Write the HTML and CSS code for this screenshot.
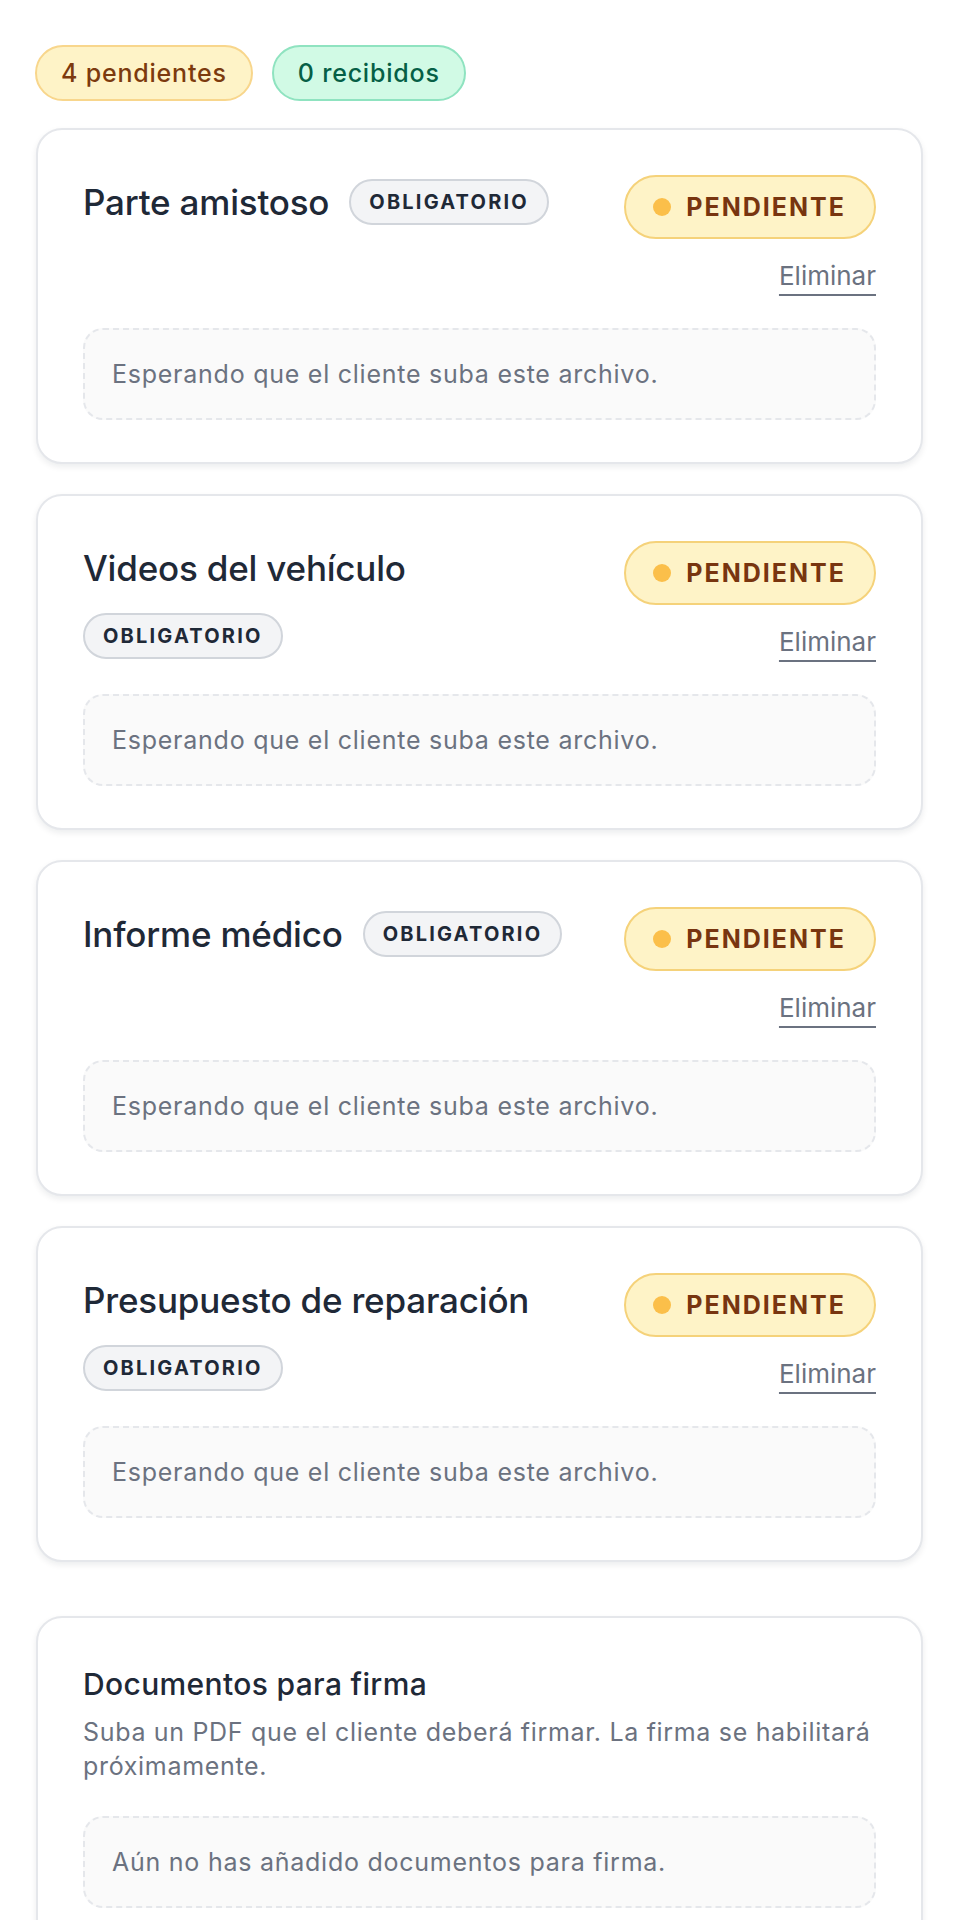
FILE: index.html
```html
<!DOCTYPE html>
<html lang="es">
<head>
<meta charset="utf-8">
<title>Documentos</title>
<link rel="stylesheet" href="styles.css">
</head>
<body>
<main class="page">
  <div class="summary">
    <span class="pill pill-pending">4 pendientes</span>
    <span class="pill pill-received">0 recibidos</span>
  </div>

  <section class="doc-list">
    <article class="card">
      <div class="card-head">
        <div class="card-title-group">
          <h3 class="card-title">Parte amistoso</h3>
          <span class="tag">OBLIGATORIO</span>
        </div>
        <div class="card-actions">
          <span class="status"><span class="status-dot"></span>PENDIENTE</span>
          <a class="remove" href="#">Eliminar</a>
        </div>
      </div>
      <div class="dropzone">Esperando que el cliente suba este archivo.</div>
    </article>

    <article class="card">
      <div class="card-head">
        <div class="card-title-group">
          <h3 class="card-title">Videos del vehículo</h3>
          <span class="tag">OBLIGATORIO</span>
        </div>
        <div class="card-actions">
          <span class="status"><span class="status-dot"></span>PENDIENTE</span>
          <a class="remove" href="#">Eliminar</a>
        </div>
      </div>
      <div class="dropzone">Esperando que el cliente suba este archivo.</div>
    </article>

    <article class="card">
      <div class="card-head">
        <div class="card-title-group">
          <h3 class="card-title">Informe médico</h3>
          <span class="tag">OBLIGATORIO</span>
        </div>
        <div class="card-actions">
          <span class="status"><span class="status-dot"></span>PENDIENTE</span>
          <a class="remove" href="#">Eliminar</a>
        </div>
      </div>
      <div class="dropzone">Esperando que el cliente suba este archivo.</div>
    </article>

    <article class="card">
      <div class="card-head">
        <div class="card-title-group">
          <h3 class="card-title">Presupuesto de reparación</h3>
          <span class="tag">OBLIGATORIO</span>
        </div>
        <div class="card-actions">
          <span class="status"><span class="status-dot"></span>PENDIENTE</span>
          <a class="remove" href="#">Eliminar</a>
        </div>
      </div>
      <div class="dropzone">Esperando que el cliente suba este archivo.</div>
    </article>
  </section>

  <section class="card sign-card">
    <h2 class="sign-title">Documentos para firma</h2>
    <p class="sign-desc">Suba un PDF que el cliente deberá firmar. La firma se habilitará próximamente.</p>
    <div class="dropzone">Aún no has añadido documentos para firma.</div>
  </section>
</main>
</body>
</html>
```

FILE: styles.css
```css
* {
  box-sizing: border-box;
}

html, body {
  margin: 0;
  padding: 0;
  background: #ffffff;
}

body {
  font-family: Inter, "Noto Sans", "Liberation Sans", sans-serif;
  color: #1f2937;
  -webkit-font-smoothing: antialiased;
}

.page {
  padding: 45px 38px 40px 36px;
}

.summary {
  display: flex;
  gap: 19px;
  margin-left: -1px;
}

.pill {
  display: inline-flex;
  align-items: center;
  height: 56px;
  padding: 0 24px;
  border: 2px solid;
  border-radius: 999px;
  font-size: 25px;
  font-weight: 500;
  letter-spacing: 0.8px;
  line-height: 1;
}

.pill-pending {
  background: #fef3c7;
  border-color: #f8d68c;
  color: #7c3a0e;
}

.pill-received {
  background: #d1fae5;
  border-color: #8fe3c0;
  color: #065f46;
}

.doc-list {
  display: flex;
  flex-direction: column;
  gap: 30px;
  margin-top: 27px;
}

.card {
  background: #ffffff;
  border: 2px solid #e5e7eb;
  border-radius: 26px;
  padding: 45px 45px 42px;
  box-shadow: 0 3px 6px rgba(17, 24, 39, 0.08);
}

.card-head {
  display: flex;
  justify-content: space-between;
  align-items: flex-start;
  gap: 24px;
  margin-bottom: 33px;
}

.card-title-group {
  flex: 1;
  min-width: 0;
  display: flex;
  flex-wrap: wrap;
  align-items: center;
  column-gap: 20px;
  row-gap: 18px;
}

.card-title {
  margin: 0;
  font-size: 35px;
  font-weight: 500;
  line-height: 54px;
  color: #1f2937;
  letter-spacing: -0.2px;
}

.tag {
  display: inline-flex;
  align-items: center;
  height: 46px;
  padding: 0 18px;
  border: 2px solid #d1d5db;
  border-radius: 999px;
  background: #f3f4f6;
  color: #1f2937;
  font-size: 20px;
  font-weight: 700;
  letter-spacing: 2.2px;
  line-height: 1;
}

.card-actions {
  flex-shrink: 0;
  display: flex;
  flex-direction: column;
  align-items: flex-end;
  gap: 17px;
}

.status {
  display: inline-flex;
  align-items: center;
  height: 64px;
  padding: 0 28px 0 27px;
  border: 2px solid #f5d27a;
  border-radius: 999px;
  background: #fef3c7;
  color: #78350f;
  font-size: 25px;
  font-weight: 700;
  letter-spacing: 2px;
  line-height: 1;
}

.status-dot {
  width: 18px;
  height: 18px;
  border-radius: 50%;
  background: #fbbf4a;
  margin-right: 15px;
  flex-shrink: 0;
}

.remove {
  font-size: 26px;
  line-height: 39px;
  color: #6b7280;
  text-decoration: underline;
  text-decoration-thickness: 2px;
  text-underline-offset: 9px;
}

.dropzone {
  border: 2px dashed #e5e7eb;
  border-radius: 20px;
  background: #fafafa;
  padding: 26px 27px;
  font-size: 25px;
  letter-spacing: 0.75px;
  line-height: 36px;
  color: #6b7280;
}

.sign-card {
  margin-top: 54px;
}

.sign-title {
  margin: 1px 0 0;
  font-size: 30px;
  font-weight: 500;
  letter-spacing: 0.35px;
  line-height: 41px;
  color: #1f2937;
}

.sign-desc {
  margin: 10px 0 33px;
  font-size: 25px;
  letter-spacing: 0.68px;
  line-height: 34px;
  color: #6b7280;
}
```
